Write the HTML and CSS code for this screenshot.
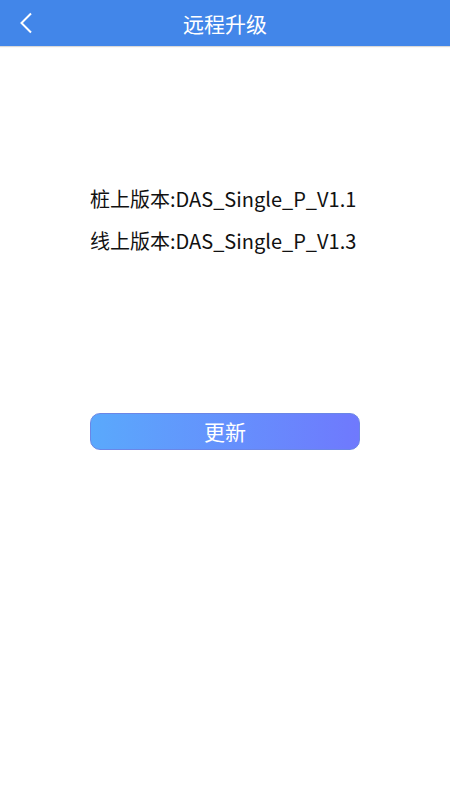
FILE: index.html
```html
<!DOCTYPE html>
<html lang="zh-CN">
<head>
<meta charset="utf-8">
<link rel="stylesheet" href="styles.css">
</head>
<body>
<header class="bar">
  <svg class="back" width="14" height="22" viewBox="0 0 14 22"><path d="M12 1.5 L2.5 11 L12 20.5" fill="none" stroke="#fff" stroke-width="2"/></svg>
  <h1 class="title">远程升级</h1>
</header>
<main class="content">
  <div class="versions">
    <p class="line">桩上版本:DAS_Single_P_V1.1</p>
    <p class="line">线上版本:DAS_Single_P_V1.3</p>
  </div>
  <button class="update">更新</button>
</main>
</body>
</html>
```
FILE: styles.css
```css
* { box-sizing: border-box; }
html, body { margin: 0; padding: 0; background: #fff; }
body { width: 450px; height: 800px; font-family: "Noto Sans CJK SC", sans-serif; color: #111; }
.bar { position: relative; height: 46px; background: #4286e9; display: flex; align-items: center; justify-content: center; box-shadow: 0 1px 1px rgba(0,0,0,0.15); }
.back { position: absolute; left: 19px; top: 12px; }
.title { margin: 0; font-size: 21px; font-weight: 400; color: #fff; line-height: 1; }
.content { display: flex; flex-direction: column; align-items: center; padding-top: 138px; }
.versions { width: 270px; display: flex; flex-direction: column; gap: 12px; }
.line { margin: 0; font-size: 20px; line-height: 30px; color: #111; white-space: nowrap; }
.update { margin-top: 157px; width: 270px; height: 37px; border: 1px solid #6b86e6; border-radius: 10px; background: linear-gradient(to right, #5aa9fc, #6f79fd); color: #fff; font-family: inherit; font-size: 21px; line-height: 1; padding: 0; }
```
